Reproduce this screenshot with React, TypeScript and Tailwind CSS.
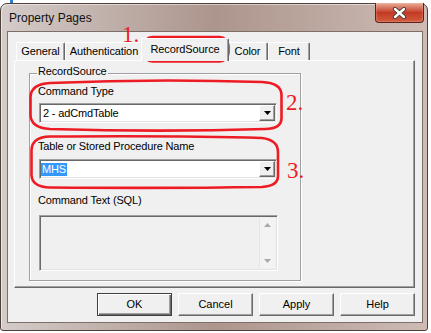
import React from "react";

const raised =
  "border border-t-white border-l-white border-r-[#696969] border-b-[#696969] shadow-[inset_-1px_-1px_0_#a0a0a0]";
const sunken =
  "border border-t-[#a0a0a0] border-l-[#a0a0a0] border-r-white border-b-white shadow-[inset_1px_1px_0_#696969,inset_-1px_-1px_0_#e3e3e3]";

function DropBtn() {
  return (
    <div className={`w-[16px] h-[16px] bg-[#f0f0f0] flex items-center justify-center ${raised}`}>
      <svg width="7" height="4" viewBox="0 0 7 4">
        <path d="M0 0H7L3.5 4Z" fill="#000" />
      </svg>
    </div>
  );
}

function Tab({ label, w, extra = "" }: { label: string; w: string; extra?: string }) {
  return (
    <div
      className={`${w} h-[18px] bg-[#f0f0f0] border-t border-l border-white border-r border-r-[#696969] shadow-[inset_-1px_0_0_#a0a0a0] rounded-t-[2px] flex items-center justify-center text-[11px] leading-[13px] tracking-[-0.1px] ${extra}`}
    >
      {label}
    </div>
  );
}

function Button({ label, def = false }: { label: string; def?: boolean }) {
  return (
    <div
      className={`w-[75px] h-[23px] bg-[#f0f0f0] flex items-center justify-center text-[11px] leading-[13px] ${
        def
          ? "border border-[#404040] shadow-[inset_1px_1px_0_#fff,inset_-1px_-1px_0_#696969,inset_-2px_-2px_0_#a0a0a0]"
          : raised
      }`}
    >
      {label}
    </div>
  );
}

export default function App() {
  return (
    <div className="relative w-[431px] h-[333px] bg-white overflow-hidden font-['Liberation_Sans',Arial,sans-serif] text-black">
      <div className="absolute left-[10px] top-0 w-[3px] h-[3px] bg-[#2a7fd4]" />
      {/* window */}
      <div className="mt-[3px] w-[428px] h-[328px] rounded-t-[7px] rounded-b-[3px] border border-[#4f403c] bg-gradient-to-r from-[#d4ccc9] via-[#ac958d] to-[#cdbbb4] flex flex-col pl-[6px] pr-[4px] pb-[7px] shadow-[inset_1px_1px_0_rgba(255,255,255,0.5)]">
        {/* title bar */}
        <div className="h-[27px] flex items-start justify-between shrink-0">
          <div className="ml-[2px] mt-[7px] text-[12px] leading-[14px] text-[#111]">Property Pages</div>
          <div className="-mt-[1px] -mr-[1px] w-[49px] h-[20px] rounded-b-[4px] border border-[#5b2319] border-t-0 bg-gradient-to-b from-[#e8ab98] via-[#c23a25] to-[#d25a3d] shadow-[inset_0_0_2px_rgba(255,220,200,0.8)] flex items-center justify-center">
            <svg width="15" height="12" viewBox="0 0 15 12">
              <path d="M3 2L12 10M12 2L3 10" stroke="#3a3a3a" strokeWidth="4.2" strokeLinecap="round" />
              <path d="M3 2L12 10M12 2L3 10" stroke="#ffffff" strokeWidth="2.4" strokeLinecap="round" />
            </svg>
          </div>
        </div>
        {/* client */}
        <div className="flex-1 border border-[#7d6e6a] bg-[#f0f0f0] flex flex-col">
          {/* tabs */}
          <div className="ml-[8px] mt-[6px] h-[22px] flex items-end">
            <Tab label="General" w="w-[49px]" />
            <Tab label="Authentication" w="w-[78px]" />
            <div className="relative z-10 -mx-[2px] -mb-[1px] w-[88px] h-[23px] bg-[#f0f0f0] border-t border-l border-white border-r border-r-[#696969] shadow-[inset_-1px_0_0_#a0a0a0] rounded-t-[2px] flex items-center justify-center pb-[2px] text-[11px] leading-[13px] tracking-[-0.1px]">
              RecordSource
            </div>
            <Tab label="Color" w="w-[41px]" />
            <Tab label="Font" w="w-[42px]" />
          </div>
          {/* panel */}
          <div className="ml-[6px] w-[401px] h-[228px] border border-t-white border-l-white border-r-[#696969] border-b-[#696969] shadow-[inset_-1px_-1px_0_#a0a0a0]">
            <div className="ml-[14px] mt-[12px] w-[272px] h-[208px] border border-[#a0a0a0] shadow-[inset_1px_1px_0_#fff,1px_1px_0_#fff] flex flex-col text-[11px] leading-[13px] tracking-[-0.15px]">
              <div className="self-start -mt-[9px] ml-[7px] px-[1px] bg-[#f0f0f0]">RecordSource</div>
              <div className="ml-[8px] mt-[7px]">Command Type</div>
              <div className={`ml-[9px] mt-[5px] w-[238px] h-[20px] bg-white flex items-center justify-between ${sunken}`}>
                <span className="ml-[3px]">2 - adCmdTable</span>
                <div className="mr-[1px]"><DropBtn /></div>
              </div>
              <div className="ml-[8px] mt-[17px]">Table or Stored Procedure Name</div>
              <div className={`ml-[9px] mt-[6px] w-[238px] h-[20px] bg-white flex items-center justify-between ${sunken}`}>
                <span className="ml-[1px] px-[1px] bg-[#3399ff] text-white">MHS</span>
                <div className="mr-[1px]"><DropBtn /></div>
              </div>
              <div className="ml-[8px] mt-[15px]">Command Text (SQL)</div>
              <div className={`ml-[9px] mt-[8px] w-[239px] h-[56px] bg-[#f0f0f0] flex justify-end p-[2px] ${sunken}`}>
                <div className="w-[16px] h-full bg-[#f3f3f3] border-l border-[#e6e6e6] flex flex-col justify-between items-center py-[5px]">
                  <svg width="7" height="4" viewBox="0 0 7 4"><path d="M0 4H7L3.5 0Z" fill="#a8a8a8" /></svg>
                  <svg width="7" height="4" viewBox="0 0 7 4"><path d="M0 0H7L3.5 4Z" fill="#a8a8a8" /></svg>
                </div>
              </div>
            </div>
          </div>
          {/* buttons */}
          <div className="mt-[5px] pr-[7px] flex justify-end gap-[6px]">
            <Button label="OK" def />
            <Button label="Cancel" />
            <Button label="Apply" />
            <Button label="Help" />
          </div>
        </div>
      </div>
      {/* red annotations */}
      <svg className="absolute inset-0 pointer-events-none" width="431" height="333" viewBox="0 0 431 333">
        <g fill="none" stroke="#ed1c24" strokeWidth="2.6">
          <rect x="143.5" y="37" width="85" height="24.5" rx="9" />
          <path d="M50 83 C120 80 200 80 262 82 Q281.5 83 281.5 95 L281.5 118 Q281.5 129 265 129 C200 131 120 131 50 129 Q31 128 30.5 115 L30.5 97 Q31 84 50 83Z" />
          <path d="M50 136.5 C120 136 200 136 262 138 Q278 140 278 152 L278 176 Q278 186 262 187 C200 188 120 188 50 187.5 Q32 187 31.5 175 L31.5 150 Q32 137 50 136.5Z" />
        </g>
        <g fill="#ed1c24" fontFamily="'Liberation Serif', 'Times New Roman', serif" fontSize="23">
          <text x="122" y="42">1.</text>
          <text x="286" y="110">2.</text>
          <text x="287" y="178">3.</text>
        </g>
      </svg>
    </div>
  );
}
